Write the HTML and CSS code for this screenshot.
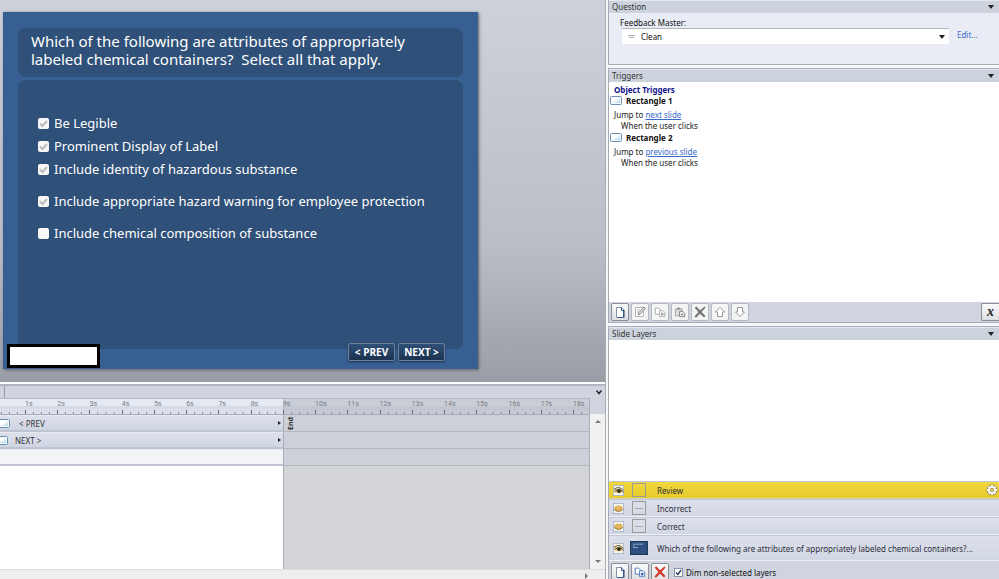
FILE: index.html
```
<!DOCTYPE html>
<html lang="en">
<head>
  <meta charset="UTF-8">
  <meta name="viewport" content="width=device-width, initial-scale=1.0">
  <title>Slide Editor</title>
  <link rel="stylesheet" href="styles.css">
</head>
<body>
  <!-- shared icons -->
  <svg class="defs" aria-hidden="true">
    <defs>
      <linearGradient id="paper" x1="0" y1="0" x2="1" y2="1">
        <stop offset="0.4" stop-color="#ffffff"/>
        <stop offset="1" stop-color="#a9d3ea"/>
      </linearGradient>
      <symbol id="shape" viewBox="0 0 12 9">
        <rect x="0.5" y="0.5" width="11" height="8" rx="1" fill="#f4fbff" stroke="#6d8fb5"/>
        <rect x="2" y="2" width="8" height="5" fill="url(#paper)"/>
      </symbol>
      <symbol id="page" viewBox="0 0 12 12">
        <path d="M2.500 1.500h5l3 3v7h-8z" fill="#fff" stroke="#8793a8"/>
        <path d="M7.500 1.500v3h3M9.500 5v6.500h-6" fill="none" stroke="#37598f"/>
      </symbol>
      <symbol id="copy" viewBox="0 0 14 12">
        <path d="M1.500 1.500h4l2 2v5h-6z" fill="#fff" stroke="currentColor"/>
        <path d="M6.500 4.500h4l2 2v5h-6z" fill="#fff" stroke="currentColor"/>
        <path d="M8 7h3v3H8z" fill="currentColor"/>
      </symbol>
      <symbol id="cross" viewBox="0 0 12 12">
        <path d="M0.500 1.500L2.500 0.500 6 4.200 10.500 0.500l1 1L7.600 6 11.500 10l-1.500 1.500L6 7.800 2 11.700 0.500 10.600 4.400 6z" fill="currentColor"/>
      </symbol>
      <symbol id="eye" viewBox="0 0 12 12">
        <rect x="0.500" y="0.500" width="11" height="11" fill="#fbf6e3" stroke="#a9b6c9"/>
        <path d="M1 6.500C3.500 3 8.500 3 11 6.500v1C8.500 9.500 4.500 9.500 1 7.500z" fill="#e9c983"/>
        <path d="M1 5C4 1.800 9 2.400 11 6M2 7C5 4.500 9 5 11 8" fill="none" stroke="#3b3223"/>
        <circle cx="6.500" cy="6.600" r="2" fill="#2a261f"/>
      </symbol>
      <symbol id="eye-closed" viewBox="0 0 12 12">
        <rect x="0.500" y="0.500" width="11" height="11" fill="#f4f4ee" stroke="#a9b6c9"/>
        <ellipse cx="6" cy="6" rx="4.600" ry="3.200" fill="#e3b45c"/>
        <path d="M1.500 6.800c2 3 7 3 9 0" fill="none" stroke="#8d6a34"/>
      </symbol>
    </defs>
  </svg>

  <main class="workspace">
    <section class="stage">
      <div class="slide">
        <h1 class="slide-title">Which of the following are attributes of appropriately<br>labeled chemical containers?&nbsp; Select all that apply.</h1>
        <div class="slide-body">
          <label class="choice"><input type="checkbox" checked>Be Legible</label>
          <label class="choice"><input type="checkbox" checked>Prominent Display of Label</label>
          <label class="choice"><input type="checkbox" checked>Include identity of hazardous substance</label>
          <label class="choice spaced"><input type="checkbox" checked>Include appropriate hazard warning for employee protection</label>
          <label class="choice spaced"><input type="checkbox">Include chemical composition of substance</label>
        </div>
        <div class="slide-blank"></div>
        <div class="slide-nav">
          <button type="button">&lt; PREV</button>
          <button type="button">NEXT &gt;</button>
        </div>
      </div>
    </section>

    <section class="timeline">
      <div class="timeline-head">
        <span class="timeline-tab"></span>
        <svg class="chevron" viewBox="0 0 6 5"><path d="M0.500 0.500L3 3.500 5.500 0.500" fill="none" stroke="#222" stroke-width="1.500"/></svg>
      </div>
      <div class="timeline-main">
        <div class="tracks">
          <div class="ruler">
            <span class="lead"></span>
            <span>1s</span><span>2s</span><span>3s</span><span>4s</span><span>5s</span><span>6s</span>
            <span>7s</span><span>8s</span><span>9s</span><span>10s</span><span>11s</span><span>12s</span>
            <span>13s</span><span>14s</span><span>15s</span><span>16s</span><span>17s</span><span class="last">18s</span>
          </div>
          <div class="track">
            <div class="clip wide"><svg class="shape"><use href="#shape"/></svg><span>&lt; PREV</span><i class="clip-end"></i></div>
            <div class="rest"><span class="end-label">End</span></div>
          </div>
          <div class="track">
            <div class="clip"><svg class="shape"><use href="#shape"/></svg><span>NEXT &gt;</span><i class="clip-end"></i></div>
            <div class="rest"></div>
          </div>
          <div class="track"><div class="clip empty"></div><div class="rest"></div></div>
          <div class="track filler"><div class="void"></div><div class="rest"></div></div>
        </div>
        <div class="vscroll"><i class="up"></i><i class="down"></i></div>
      </div>
      <div class="hscroll"><i class="right"></i></div>
    </section>
  </main>

  <aside class="sidebar">
    <section class="panel question">
      <header class="panel-head"><h2>Question</h2><i class="arrow"></i></header>
      <div class="question-body">
        <label class="field-label" for="master">Feedback Master:</label>
        <div class="field-row">
          <div class="combo">
            <svg class="combo-icon" viewBox="0 0 8 5"><path d="M0 1.500h8M1 3.500h6" stroke="#a5a5a5"/></svg>
            <select id="master"><option>Clean</option></select>
            <i class="arrow"></i>
          </div>
          <a href="#">Edit...</a>
        </div>
      </div>
    </section>

    <section class="panel triggers">
      <header class="panel-head"><h2>Triggers</h2><i class="arrow"></i></header>
      <div class="trigger-list">
        <h3>Object Triggers</h3>
        <h4><svg class="shape"><use href="#shape"/></svg>Rectangle 1</h4>
        <p>Jump to <a href="#">next slide</a></p>
        <p class="when">When the user clicks</p>
        <h4><svg class="shape"><use href="#shape"/></svg>Rectangle 2</h4>
        <p>Jump to <a href="#">previous slide</a></p>
        <p class="when">When the user clicks</p>
      </div>
      <div class="toolbar">
        <button type="button" class="tool" aria-label="New trigger"><svg viewBox="0 0 12 12"><use href="#page"/></svg></button>
        <button type="button" class="tool off" aria-label="Edit trigger"><svg viewBox="0 0 12 12"><path d="M1.500 1.500h8v9h-8zM3 4h3M3 6h2" fill="#fff" stroke="#b8b8b8"/><path d="M4 9l1-2.500L10 1l1.500 1.500L6.500 8z" fill="#ddd" stroke="#8a8a8a"/></svg></button>
        <button type="button" class="tool off" aria-label="Copy trigger"><svg viewBox="0 0 14 12"><use href="#copy"/></svg></button>
        <button type="button" class="tool off" aria-label="Paste trigger"><svg viewBox="0 0 14 12"><path d="M1.500 2.500h8v8h-8z" fill="#ddd" stroke="#a0a0a0"/><path d="M3.500 1h4v2h-4z" fill="#8a8a8a"/><path d="M6.500 5.500h4l2 2v4h-6z" fill="#fff" stroke="#777"/><path d="M8 8h3v2H8z" fill="#888"/></svg></button>
        <button type="button" class="tool off dark" aria-label="Delete trigger"><svg viewBox="0 0 12 12"><use href="#cross"/></svg></button>
        <button type="button" class="tool off" aria-label="Move up"><svg viewBox="0 0 12 12"><path d="M6 1.500l4.500 4.500H8.500v4.500h-5V6H1.500z" fill="#fff" stroke="#999"/></svg></button>
        <button type="button" class="tool off" aria-label="Move down"><svg viewBox="0 0 12 12"><path d="M6 10.500L1.500 6h2V1.500h5V6h2z" fill="#fff" stroke="#999"/></svg></button>
        <button type="button" class="tool variable">x</button>
      </div>
    </section>

    <section class="panel layers">
      <header class="panel-head"><h2>Slide Layers</h2><i class="arrow"></i></header>
      <div class="layers-space"></div>
      <ul class="layer-list">
        <li class="layer selected">
          <svg class="eye"><use href="#eye"/></svg>
          <span class="thumb"></span>
          <span class="name">Review</span>
          <svg class="gear" viewBox="0 0 12 12">
            <path d="M6 0.500v11M0.500 6h11M2.100 2.100l7.800 7.800M9.900 2.100l-7.800 7.800" stroke="#8a8466" stroke-width="3"/>
            <circle cx="6" cy="6" r="4.500" fill="#8a8466"/>
            <path d="M6 1v10M1 6h10M2.500 2.500l7 7M9.500 2.500l-7 7" stroke="#fff" stroke-width="1.800"/>
            <circle cx="6" cy="6" r="3.800" fill="#fff"/>
            <circle cx="6" cy="6" r="1.800" fill="#e5cb40" stroke="#8a8466" stroke-width="0.700"/>
          </svg>
        </li>
        <li class="layer">
          <svg class="eye"><use href="#eye-closed"/></svg>
          <span class="thumb line"></span>
          <span class="name">Incorrect</span>
        </li>
        <li class="layer">
          <svg class="eye"><use href="#eye-closed"/></svg>
          <span class="thumb line"></span>
          <span class="name">Correct</span>
        </li>
        <li class="layer base">
          <svg class="eye"><use href="#eye"/></svg>
          <span class="thumb blue"><svg viewBox="0 0 18 14"><path d="M2 2.500h12M2 4.500h2M2 6.500h6" stroke="#9db6d2"/></svg></span>
          <span class="name">Which of the following are attributes of appropriately labeled chemical containers?...</span>
        </li>
      </ul>
      <div class="toolbar layer-tools">
        <button type="button" class="tool" aria-label="New layer"><svg viewBox="0 0 12 12"><use href="#page"/></svg></button>
        <button type="button" class="tool copy" aria-label="Duplicate layer"><svg viewBox="0 0 14 12"><use href="#copy"/></svg></button>
        <button type="button" class="tool delete" aria-label="Delete layer"><svg viewBox="0 0 12 12"><use href="#cross"/></svg></button>
        <label class="dim"><input type="checkbox" checked>Dim non-selected layers</label>
      </div>
    </section>
  </aside>
</body>
</html>
```
FILE: styles.css
```
* {
  margin: 0;
  padding: 0;
  box-sizing: border-box;
}

body {
  display: grid;
  grid-template-columns: 1fr 391px;
  height: 100vh;
  overflow: hidden;
  background-color: #f5f6f8;
  color: #222;
  font-family: "Noto Sans", "Open Sans", sans-serif;
  font-size: 8px;
  line-height: 11px;
}

button,
input,
select {
  font: inherit;
  color: inherit;
}

a {
  color: #3a6bcb;
}

.defs {
  position: absolute;
  width: 0;
  height: 0;
}

.shape {
  flex: none;
  width: 12px;
  height: 9px;
}

.arrow {
  flex: none;
  border: 3px solid transparent;
  border-top: 4px solid #222;
  border-bottom: 0;
}

/* Stage */
.workspace {
  display: flex;
  flex-direction: column;
  min-width: 0;
  border-right: 1px solid #a9adb7;
  margin-right: 2px;
}

.stage {
  flex: 1;
  display: flex;
  padding: 12px 127px 13px 3px;
  background: linear-gradient(#ced1da, #bbbec7 64%, #999da5);
}

.slide {
  position: relative;
  flex: 1;
  display: flex;
  flex-direction: column;
  gap: 3px;
  padding: 16px 15px 20px;
  background-color: #375f91;
  box-shadow: 1px 1px 3px #5f636c;
  color: #fff;
}

.slide-title {
  padding: 4px 13px 9px;
  border-radius: 8px;
  background-color: #2f5078;
  font-size: 15px;
  font-weight: 400;
  line-height: 18px;
  white-space: nowrap;
}

.slide-body {
  flex: 1;
  display: flex;
  flex-direction: column;
  gap: 5px;
  padding: 34px 20px 0;
  border-radius: 8px;
  background-color: #2f5078;
}

.choice {
  display: flex;
  align-items: center;
  gap: 5px;
  font-size: 13px;
  line-height: 18px;
  white-space: nowrap;
}

.choice.spaced {
  margin-top: 9px;
}

.choice input {
  appearance: none;
  width: 11px;
  height: 11px;
  border-radius: 2px;
  background: #f8f8f8 center / 9px 9px no-repeat;
}

.choice input:checked {
  background-image: url("data:image/svg+xml,%3Csvg xmlns='http://www.w3.org/2000/svg' viewBox='0 0 9 9'%3E%3Cpath d='M1 4.500L3.500 7 8 2' fill='none' stroke='%23bdbdbd' stroke-width='2'/%3E%3C/svg%3E");
}

.slide-blank {
  position: absolute;
  left: 4px;
  bottom: 1px;
  width: 93px;
  height: 24px;
  border: 3px solid #000;
  background-color: #fff;
}

.slide-nav {
  position: absolute;
  right: 33px;
  bottom: 8px;
  display: flex;
  gap: 3px;
}

.slide-nav button {
  width: 47px;
  height: 18px;
  border: 1px solid #6d8099;
  border-radius: 2px;
  background: linear-gradient(#2f5078, #1c3350);
  box-shadow: 0 1px 2px #1c3350;
  font-family: "Open Sans", sans-serif;
  font-size: 10px;
  font-weight: 700;
  line-height: 14px;
  white-space: nowrap;
}

/* Timeline */
.timeline {
  display: flex;
  flex-direction: column;
  height: 197px;
  border-top: 2px solid #fff;
}

.timeline-head {
  display: flex;
  align-items: center;
  justify-content: space-between;
  height: 14px;
  padding-right: 3px;
  border-top: 2px solid #b1b5c3;
  background-color: #d0d4de;
}

.timeline-tab {
  align-self: stretch;
  width: 5px;
  border-right: 1px solid #9599a3;
}

.chevron {
  width: 6px;
  height: 5px;
}

.timeline-main {
  flex: 1;
  display: flex;
}

.tracks {
  flex: 1;
  display: flex;
  flex-direction: column;
  border-right: 1px solid #aaaeb9;
}

.ruler {
  display: grid;
  grid-template-columns: 25px repeat(17, 1fr) 16px;
  height: 17px;
  border-top: 1px solid #b3b8c5;
  border-bottom: 1px solid #a9adba;
  background: linear-gradient(90deg, transparent 48%, #a9adb7 48%, rgba(175, 179, 188, 0.5) 48.3%), linear-gradient(#e5e9f1 50%, #d5dae5 50%, #dfe3ec);
  color: #777b85;
  font-family: Roboto, sans-serif;
  font-size: 7px;
  line-height: 11px;
}

/* long tick at the second, short ones every quarter */
.ruler span {
  background:
    linear-gradient(#666b78, #666b78) 0 100% / 1px 4px no-repeat,
    linear-gradient(90deg, #858a97 1px, transparent 1px) 0 100% / 25% 2px repeat-x;
}

.ruler .lead {
  background: linear-gradient(90deg, #858a97 1px, transparent 1px) 1px 100% / 8px 2px repeat-x;
}

.ruler .last {
  background:
    linear-gradient(#666b78, #666b78) 0 100% / 1px 4px no-repeat,
    linear-gradient(90deg, #858a97 1px, transparent 1px) 0 100% / 8px 2px repeat-x;
}

.track {
  display: grid;
  grid-template-columns: 48% 1fr;
  height: 17px;
}

.track.filler {
  flex: 1;
  height: auto;
}

.clip {
  display: flex;
  align-items: center;
  gap: 7px;
  margin-left: -4px;
  border-bottom: 2px solid #c0c4d2;
  border-top: 1px solid #e7e9f1;
  background: linear-gradient(#dce0eb, #d0d5e3);
  color: #333;
}

.clip.wide {
  gap: 9px;
  margin-left: -2px;
}

.clip.empty {
  margin-left: 0;
  background: #f2f4f8;
}

.clip-end {
  margin-left: auto;
  margin-right: 2px;
  border: 2px solid transparent;
  border-left: 3px solid #222;
  border-right: 0;
}

.rest {
  border-left: 1px solid #a9adb7;
  border-bottom: 1px solid #b3b6bf;
  background-color: #cdd0d8;
}

.filler .rest {
  border-bottom: 0;
  background-color: #d3d4d8;
}

.void {
  background-color: #fff;
}

.end-label {
  display: block;
  margin: 2px 0 0 3px;
  width: 8px;
  writing-mode: vertical-rl;
  transform: rotate(180deg);
  color: #333;
  font-size: 7px;
  font-weight: 700;
  line-height: 8px;
}

.vscroll {
  display: flex;
  flex-direction: column;
  justify-content: space-between;
  align-items: center;
  width: 15px;
  padding: 22px 0 6px;
  background: linear-gradient(#d0d4de 16px, #f1f1f1 16px);
}

.up,
.down {
  border: 3px solid transparent;
}

.up {
  border-top: 0;
  border-bottom-color: #777;
}

.down {
  border-bottom: 0;
  border-top-color: #777;
}

.hscroll {
  display: flex;
  justify-content: flex-end;
  align-items: flex-end;
  height: 10px;
  padding-right: 17px;
  border-top: 1px solid #dcdde1;
  background-color: #eee;
}

.right {
  border: 3px solid transparent;
  border-left-color: #777;
  border-right: 0;
}

/* Sidebar */
.sidebar {
  display: flex;
  flex-direction: column;
  gap: 3px;
  min-width: 0;
}

.panel {
  display: flex;
  flex-direction: column;
  border: solid #a7abb5;
  border-width: 1px 0 1px 1px;
}

.panel-head {
  display: flex;
  align-items: center;
  justify-content: space-between;
  height: 13px;
  padding: 0 5px 1px 3px;
  border-top: 1px solid #e4e8ee;
  background-color: #cdd3dc;
  color: #333;
}

.panel-head h2 {
  font-size: 8px;
  font-weight: 400;
}

.question {
  height: 65px;
  border-top: 0;
  background-color: #e9ecf5;
}

.question-body {
  padding: 4px 17px 0 11px;
}

.field-label {
  display: block;
  line-height: 11px;
  color: #111;
}

.field-row {
  display: flex;
  align-items: flex-start;
  gap: 8px;
  padding-left: 2px;
}

.field-row a {
  width: 25px;
  line-height: 14px;
  text-decoration: none;
}

.combo {
  flex: 1;
  display: flex;
  align-items: center;
  height: 16px;
  padding: 0 4px 0 6px;
  border-top: 1px solid #b3b6bd;
  background-color: #fff;
}

.combo-icon {
  width: 7px;
  height: 5px;
}

.combo select {
  flex: 1;
  appearance: none;
  padding-left: 6px;
  border: 0;
  background: none;
  color: #111;
}

.combo .arrow {
  border-width: 4px 3px 0;
}

.triggers {
  height: 255px;
  background-color: #fff;
}

.trigger-list {
  flex: 1;
  padding: 2px 1px;
}

.trigger-list h3,
.trigger-list h4 {
  font-size: 8px;
  font-weight: 700;
}

.trigger-list h3 {
  padding-left: 4px;
  color: #11118a;
}

.trigger-list h4 {
  display: flex;
  align-items: center;
  gap: 4px;
  color: #111;
}

.trigger-list p {
  margin-top: 3px;
  padding-left: 4px;
}

.trigger-list .when {
  margin: 0 0 1px;
  padding-left: 11px;
}

.toolbar {
  display: flex;
  align-items: center;
  gap: 2px;
  height: 20px;
  padding-left: 2px;
  background-color: #d0d4de;
}

.tool {
  display: flex;
  align-items: center;
  justify-content: center;
  width: 18px;
  height: 18px;
  border: 1px solid #8b8f96;
  border-radius: 2px;
  background: linear-gradient(#fafafa, #dedfe2);
}

.tool svg {
  width: 12px;
  height: 12px;
}

.tool.off {
  border-color: #b5b9c1;
  background: #f3f4f5;
  color: #a3a3a3;
}

.tool.off.dark {
  color: #777;
}

.tool.copy {
  color: #3f6cb5;
}

.tool.delete {
  color: #cf3b2c;
}

.tool.variable {
  margin-left: auto;
  border-right: 0;
  border-radius: 2px 0 0 2px;
  font: italic 700 14px "Liberation Serif", serif;
}

.layers {
  flex: 1;
  border-bottom: 0;
  background-color: #fff;
}

.layers-space {
  flex: 1;
}

.layer-list {
  list-style: none;
}

.layer {
  display: flex;
  align-items: center;
  height: 18px;
  padding: 0 1px 0 4px;
  border-top: 1px solid #c2c7d6;
  border-bottom: 1px solid #eef0f5;
  background: linear-gradient(#dce0eb, #d2d7e5);
  color: #2e2e38;
}

.layer.selected {
  border-bottom-color: #d6d3ba;
  background: linear-gradient(#f1d73e, #e9cb2b);
}

.layer.base {
  height: 26px;
}

.eye {
  flex: none;
  width: 11px;
  height: 11px;
}

.thumb {
  flex: none;
  width: 14px;
  height: 14px;
  margin: 0 11px 0 8px;
  border: 1px solid #9a9c98;
}

.thumb.line {
  background: linear-gradient(#aaa, #aaa) center / 8px 1px no-repeat;
}

.thumb.blue {
  width: 18px;
  margin: 0 9px 0 6px;
  border-color: #1f3855;
  background-color: #2c5080;
}

.thumb.blue svg {
  display: block;
  width: 16px;
  height: 12px;
}

.name {
  white-space: nowrap;
}

.gear {
  width: 12px;
  height: 12px;
  margin-left: auto;
}

.layer-tools {
  align-items: flex-start;
  height: 18px;
  padding-top: 2px;
}

.dim {
  display: flex;
  align-items: center;
  gap: 3px;
  margin: 4px 0 0 3px;
  color: #111;
}

.dim input {
  appearance: none;
  width: 9px;
  height: 9px;
  border: 1px solid #8b93a3;
  background: #fff url("data:image/svg+xml,%3Csvg xmlns='http://www.w3.org/2000/svg' viewBox='0 0 7 7'%3E%3Cpath d='M1 3.500L3 5.500 6 1' fill='none' stroke='%23223a66' stroke-width='1.400'/%3E%3C/svg%3E") center / 7px 7px;
}
```
